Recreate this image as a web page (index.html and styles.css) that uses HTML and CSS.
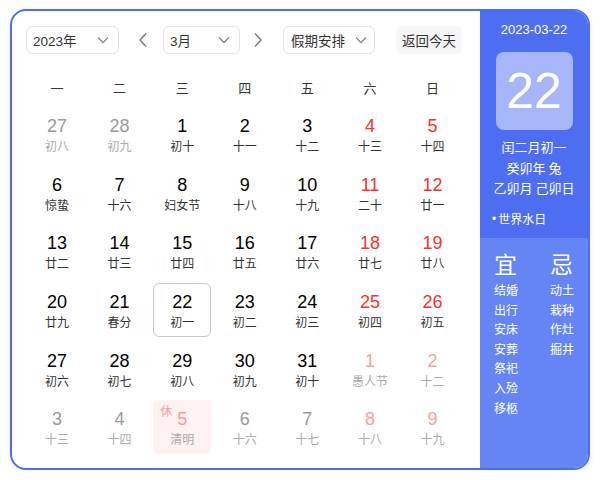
FILE: index.html
```html
<!DOCTYPE html>
<html lang="zh">
<head>
<meta charset="utf-8">
<link rel="stylesheet" href="styles.css">
</head>
<body>
<div class="cal">
  <div class="main">
    <div class="toolbar">
      <div class="select year"><span>2023年</span><svg class="chev" width="12" height="8" viewBox="0 0 12 8"><path d="M1 1.5 L6 6.5 L11 1.5" fill="none" stroke="#888" stroke-width="1.3"/></svg></div>
      <svg class="arrow prev" width="10" height="16" viewBox="0 0 10 16"><path d="M8 1.5 L2 8 L8 14.5" fill="none" stroke="#777" stroke-width="1.4"/></svg>
      <div class="select month"><span>3月</span><svg class="chev" width="12" height="8" viewBox="0 0 12 8"><path d="M1 1.5 L6 6.5 L11 1.5" fill="none" stroke="#888" stroke-width="1.3"/></svg></div>
      <svg class="arrow next" width="10" height="16" viewBox="0 0 10 16"><path d="M2 1.5 L8 8 L2 14.5" fill="none" stroke="#777" stroke-width="1.4"/></svg>
      <div class="select holiday"><span>假期安排</span><svg class="chev" width="12" height="8" viewBox="0 0 12 8"><path d="M1 1.5 L6 6.5 L11 1.5" fill="none" stroke="#888" stroke-width="1.3"/></svg></div>
      <div class="today-btn">返回今天</div>
    </div>
    <div class="weekhead">
      <span>一</span><span>二</span><span>三</span><span>四</span><span>五</span><span>六</span><span>日</span>
    </div>
    <div class="grid">
      <div class="cell other"><b>27</b><i>初八</i></div>
      <div class="cell other"><b>28</b><i>初九</i></div>
      <div class="cell"><b>1</b><i>初十</i></div>
      <div class="cell"><b>2</b><i>十一</i></div>
      <div class="cell"><b>3</b><i>十二</i></div>
      <div class="cell wk"><b>4</b><i>十三</i></div>
      <div class="cell wk"><b>5</b><i>十四</i></div>

      <div class="cell"><b>6</b><i>惊蛰</i></div>
      <div class="cell"><b>7</b><i>十六</i></div>
      <div class="cell"><b>8</b><i>妇女节</i></div>
      <div class="cell"><b>9</b><i>十八</i></div>
      <div class="cell"><b>10</b><i>十九</i></div>
      <div class="cell wk"><b>11</b><i>二十</i></div>
      <div class="cell wk"><b>12</b><i>廿一</i></div>

      <div class="cell"><b>13</b><i>廿二</i></div>
      <div class="cell"><b>14</b><i>廿三</i></div>
      <div class="cell"><b>15</b><i>廿四</i></div>
      <div class="cell"><b>16</b><i>廿五</i></div>
      <div class="cell"><b>17</b><i>廿六</i></div>
      <div class="cell wk"><b>18</b><i>廿七</i></div>
      <div class="cell wk"><b>19</b><i>廿八</i></div>

      <div class="cell"><b>20</b><i>廿九</i></div>
      <div class="cell"><b>21</b><i>春分</i></div>
      <div class="cell selected"><b>22</b><i>初一</i></div>
      <div class="cell"><b>23</b><i>初二</i></div>
      <div class="cell"><b>24</b><i>初三</i></div>
      <div class="cell wk"><b>25</b><i>初四</i></div>
      <div class="cell wk"><b>26</b><i>初五</i></div>

      <div class="cell"><b>27</b><i>初六</i></div>
      <div class="cell"><b>28</b><i>初七</i></div>
      <div class="cell"><b>29</b><i>初八</i></div>
      <div class="cell"><b>30</b><i>初九</i></div>
      <div class="cell"><b>31</b><i>初十</i></div>
      <div class="cell other wk"><b>1</b><i>愚人节</i></div>
      <div class="cell other wk"><b>2</b><i>十二</i></div>

      <div class="cell other"><b>3</b><i>十三</i></div>
      <div class="cell other"><b>4</b><i>十四</i></div>
      <div class="cell other rest"><em>休</em><b>5</b><i>清明</i></div>
      <div class="cell other"><b>6</b><i>十六</i></div>
      <div class="cell other"><b>7</b><i>十七</i></div>
      <div class="cell other wk"><b>8</b><i>十八</i></div>
      <div class="cell other wk"><b>9</b><i>十九</i></div>
    </div>
  </div>
  <div class="side">
    <div class="side-top">
      <div class="date">2023-03-22</div>
      <div class="bigday">22</div>
      <div class="lunar">闰二月初一</div>
      <div class="lunar">癸卯年 兔</div>
      <div class="lunar">乙卯月 己卯日</div>
      <div class="fest"><span class="dot">•</span>世界水日</div>
    </div>
    <div class="side-bottom">
      <div class="col">
        <div class="head">宜</div>
        <div>结婚</div><div>出行</div><div>安床</div><div>安葬</div><div>祭祀</div><div>入殓</div><div>移柩</div>
      </div>
      <div class="col">
        <div class="head">忌</div>
        <div>动土</div><div>栽种</div><div>作灶</div><div>掘井</div>
      </div>
    </div>
  </div>
</div>
</body>
</html>
```

FILE: styles.css
```css
* { box-sizing: border-box; }
html, body { margin: 0; padding: 0; background: #fff; }
body {
  font-family: "Liberation Sans", Arial, "Noto Sans CJK SC", sans-serif;
  color: #222;
}
.cal {
  margin: 9px 0 0 10px;
  width: 580px;
  height: 461px;
  border: 2px solid #4e6ef2;
  border-radius: 16px;
  overflow: hidden;
  display: flex;
  box-shadow: 0 2px 6px rgba(0,0,0,0.08);
}
.main {
  width: 468px;
  padding: 15px 0 0 14px;
}
.toolbar {
  display: flex;
  align-items: center;
  height: 28px;
}
.select {
  height: 28px;
  border: 1px solid #e2e4ea;
  border-radius: 6px;
  display: flex;
  align-items: center;
  justify-content: space-between;
  padding: 0 9px 0 6px;
  font-size: 13.5px;
  color: #333;
}
.year { width: 93px; }
.month { width: 77px; }
.holiday { width: 92px; padding-left: 7px; padding-right: 7px; }
.arrow.prev { margin: 0 15px 0 19px; }
.arrow.next { margin: 0 20px 0 13px; }
.today-btn {
  margin-left: 21px;
  height: 28px;
  width: 66px;
  border-radius: 6px;
  background: #f5f5f6;
  font-size: 13.5px;
  color: #333;
  display: flex;
  align-items: center;
  justify-content: center;
}
.weekhead {
  margin: 18px 0 0 2px;
  display: grid;
  grid-template-columns: repeat(7, 58px);
  column-gap: 4.6px;
  height: 30px;
  align-items: center;
  font-size: 13px;
  color: #333;
  font-family: "Noto Sans CJK SC", sans-serif;
}
.weekhead span { text-align: center; }
.grid {
  margin: 5px 0 0 2px;
  display: grid;
  grid-template-columns: repeat(7, 58px);
  grid-auto-rows: 54px;
  column-gap: 4.6px;
  row-gap: 4.7px;
}
.cell {
  position: relative;
  display: flex;
  flex-direction: column;
  align-items: center;
  padding-top: 7px;
  border-radius: 6px;
  border: 1px solid transparent;
}
.cell b {
  font-weight: normal;
  font-size: 18px;
  line-height: 22px;
  color: #000;
  font-family: "Liberation Sans", Arial, sans-serif;
}
.cell i {
  font-style: normal;
  font-size: 12px;
  line-height: 16px;
  margin-top: 1px;
  color: #333;
  font-family: "Noto Sans CJK SC", sans-serif;
}
.cell.wk b { color: #f73131; }
.cell.other b { color: #999; }
.cell.other i { color: #aaa; }
.cell.other.wk b { color: #fca0a0; }
.cell.selected { border-color: #c4c7ce; }
.cell.rest { background: #fdf1f2; }
.cell.rest b { color: #fb9a9a; }
.cell.rest em {
  position: absolute;
  left: 6px;
  top: 3px;
  font-style: normal;
  font-size: 12px;
  line-height: 14px;
  color: #fb9a9a;
  font-family: "Noto Sans CJK SC", sans-serif;
}
.side {
  width: 108px;
  display: flex;
  flex-direction: column;
  color: #fff;
  font-family: "Noto Sans CJK SC", sans-serif;
}
.side-top {
  background: #4e6ef2;
  height: 227px;
  display: flex;
  flex-direction: column;
  align-items: center;
  padding-top: 11px;
}
.date {
  font-family: "Liberation Sans", Arial, sans-serif;
  font-size: 13px;
  line-height: 16px;
}
.bigday {
  margin-top: 14px;
  width: 77px;
  height: 78px;
  border-radius: 8px;
  background: #a7b6f9;
  font-family: "Liberation Sans", Arial, sans-serif;
  font-size: 50px;
  display: flex;
  align-items: center;
  justify-content: center;
  margin-bottom: 7px;
}
.lunar {
  font-size: 13px;
  line-height: 20.5px;
}
.fest {
  align-self: flex-start;
  margin: 12px 0 0 12px;
  font-size: 12px;
  line-height: 16px;
  display: flex;
  align-items: center;
}
.fest .dot {
  font-family: "Liberation Sans", Arial, sans-serif;
  margin-right: 2px;
}
.side-bottom {
  flex: 1;
  background: #6685f5;
  display: flex;
  padding: 10px 0 0 14px;
  gap: 32px;
}
.col {
  display: flex;
  flex-direction: column;
  font-size: 12px;
  line-height: 19.6px;
}
.col .head {
  font-size: 23px;
  line-height: 30px;
  margin-bottom: 2px;
}
```
